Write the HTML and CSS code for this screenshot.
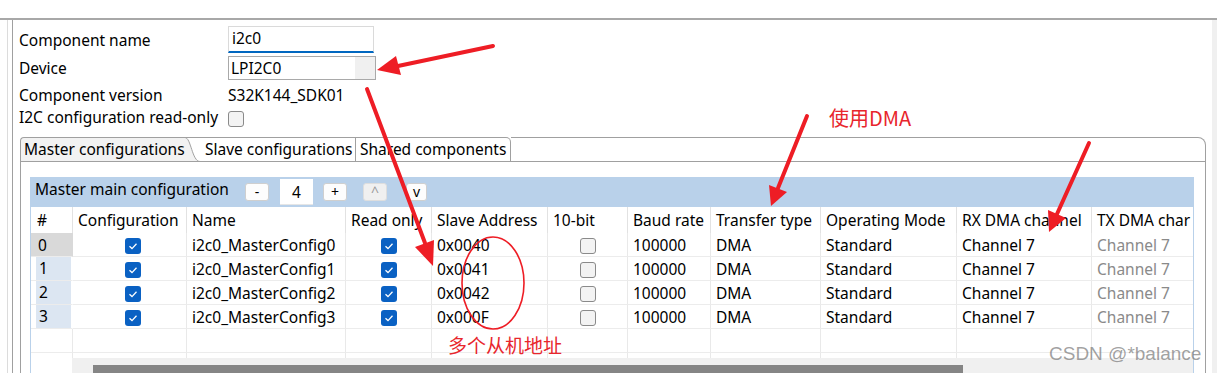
FILE: index.html
```html
<!DOCTYPE html>
<html lang="en">

<head>
    <meta charset="UTF-8">
    <title>Component Inspector - i2c0</title>
    <link rel="stylesheet" href="styles.css">
</head>

<body>
    <div class="window">
        <div class="topbar"></div>
        <div class="main">
            <div class="gutter"></div>
            <div class="spacer"></div>
            <div class="editor">
                <div class="props">
                    <div class="label">Component name</div>
                    <div><div class="textbox">i2c0</div></div>
                    <div class="label">Device</div>
                    <div><div class="combo"><span>LPI2C0</span><span class="combo-btn"></span></div></div>
                    <div class="label">Component version</div>
                    <div class="value">S32K144_SDK01</div>
                    <div class="label">I2C configuration read-only</div>
                    <div><span class="check"></span></div>
                </div>

                <div class="tabfolder">
                    <div class="tabrow">
                        <div class="tab active">Master configurations</div>
                        <svg class="tab-curve" width="15" height="25" viewBox="0 0 15 25">
                            <path d="M0 0.5 C6 0.5 7 24.5 15 24.5 L0 24.5 Z" fill="#f2f2f2" />
                            <path d="M0 0.5 L15 0.5" stroke="#a0a0a0" fill="none" />
                            <path d="M0 0.5 C6 0.5 7 24.5 15 24.5" stroke="#a0a0a0" fill="none" />
                            <path d="M0 24.5 L15 24.5" stroke="#a0a0a0" fill="none" />
                        </svg>
                        <div class="tab slave">Slave configurations</div>
                        <div class="tab shared">Shared components</div>
                        <div class="tab-fill"></div>
                    </div>
                    <div class="tabbody">
                        <div class="section">
                            <div class="section-head">
                                <span class="section-title">Master main configuration</span>
                                <button class="btn minus">-</button>
                                <span class="count">4</span>
                                <button class="btn plus">+</button>
                                <button class="btn up" disabled>^</button>
                                <button class="btn down">v</button>
                            </div>
                            <div class="gridview">
                                <table>
                                    <colgroup>
                                        <col style="width:42px">
                                        <col style="width:114px">
                                        <col style="width:159px">
                                        <col style="width:86px">
                                        <col style="width:116px">
                                        <col style="width:80px">
                                        <col style="width:83px">
                                        <col style="width:110px">
                                        <col style="width:136px">
                                        <col style="width:135px">
                                        <col style="width:150px">
                                    </colgroup>
                                    <thead>
                                        <tr>
                                            <th class="idx">#</th>
                                            <th>Configuration</th>
                                            <th>Name</th>
                                            <th>Read only</th>
                                            <th>Slave Address</th>
                                            <th>10-bit</th>
                                            <th>Baud rate</th>
                                            <th>Transfer type</th>
                                            <th>Operating Mode</th>
                                            <th>RX DMA channel</th>
                                            <th>TX DMA char</th>
                                        </tr>
                                    </thead>
                                    <tbody>
                                        <tr>
                                            <td class="idx sel">0</td>
                                            <td class="cb-conf"><span class="check on"><svg viewBox="0 0 16 16"><path d="M4.5 8.3 L7 10.6 L11.5 5.8" /></svg></span></td>
                                            <td>i2c0_MasterConfig0</td>
                                            <td class="cb-ro"><span class="check on"><svg viewBox="0 0 16 16"><path d="M4.5 8.3 L7 10.6 L11.5 5.8" /></svg></span></td>
                                            <td>0x0040</td>
                                            <td class="cb-bit"><span class="check"></span></td>
                                            <td>100000</td>
                                            <td>DMA</td>
                                            <td>Standard</td>
                                            <td>Channel 7</td>
                                            <td class="muted">Channel 7</td>
                                        </tr>
                                        <tr>
                                            <td class="idx"><div class="rowhead">1</div></td>
                                            <td class="cb-conf"><span class="check on"><svg viewBox="0 0 16 16"><path d="M4.5 8.3 L7 10.6 L11.5 5.8" /></svg></span></td>
                                            <td>i2c0_MasterConfig1</td>
                                            <td class="cb-ro"><span class="check on"><svg viewBox="0 0 16 16"><path d="M4.5 8.3 L7 10.6 L11.5 5.8" /></svg></span></td>
                                            <td>0x0041</td>
                                            <td class="cb-bit"><span class="check"></span></td>
                                            <td>100000</td>
                                            <td>DMA</td>
                                            <td>Standard</td>
                                            <td>Channel 7</td>
                                            <td class="muted">Channel 7</td>
                                        </tr>
                                        <tr>
                                            <td class="idx"><div class="rowhead">2</div></td>
                                            <td class="cb-conf"><span class="check on"><svg viewBox="0 0 16 16"><path d="M4.5 8.3 L7 10.6 L11.5 5.8" /></svg></span></td>
                                            <td>i2c0_MasterConfig2</td>
                                            <td class="cb-ro"><span class="check on"><svg viewBox="0 0 16 16"><path d="M4.5 8.3 L7 10.6 L11.5 5.8" /></svg></span></td>
                                            <td>0x0042</td>
                                            <td class="cb-bit"><span class="check"></span></td>
                                            <td>100000</td>
                                            <td>DMA</td>
                                            <td>Standard</td>
                                            <td>Channel 7</td>
                                            <td class="muted">Channel 7</td>
                                        </tr>
                                        <tr>
                                            <td class="idx"><div class="rowhead">3</div></td>
                                            <td class="cb-conf"><span class="check on"><svg viewBox="0 0 16 16"><path d="M4.5 8.3 L7 10.6 L11.5 5.8" /></svg></span></td>
                                            <td>i2c0_MasterConfig3</td>
                                            <td class="cb-ro"><span class="check on"><svg viewBox="0 0 16 16"><path d="M4.5 8.3 L7 10.6 L11.5 5.8" /></svg></span></td>
                                            <td>0x000F</td>
                                            <td class="cb-bit"><span class="check"></span></td>
                                            <td>100000</td>
                                            <td>DMA</td>
                                            <td>Standard</td>
                                            <td>Channel 7</td>
                                            <td class="muted">Channel 7</td>
                                        </tr>
                                        <tr class="empty">
                                            <td></td><td></td><td></td><td></td><td></td><td></td>
                                            <td></td><td></td><td></td><td></td><td></td>
                                        </tr>
                                        <tr class="empty">
                                            <td></td><td></td><td></td><td></td><td></td><td></td>
                                            <td></td><td></td><td></td><td></td><td></td>
                                        </tr>
                                    </tbody>
                                </table>
                            </div>
                            <div class="hscroll"><div class="thumb"></div></div>
                        </div>
                    </div>
                </div>
            </div>
            <div class="vbar"></div>
        </div>

        <!-- red annotations drawn on top of the screenshot -->
        <svg class="marks" width="1217" height="373" viewBox="0 0 1217 373">
            <g stroke="#ee1d25" stroke-width="4" stroke-linecap="round" fill="none">
                <path d="M493 46 L398 66" />
                <path d="M367 89 L425 243" />
                <path d="M807 116 L778 188" />
                <path d="M1089 143 L1057 214" />
            </g>
            <g fill="#ee1d25">
                <path d="M377 70 L401 75 L396 56 Z" />
                <path d="M433 266 L434 240 L415 247 Z" />
                <path d="M771 206 L787 192 L769 185 Z" />
                <path d="M1049 232 L1066 218 L1048 210 Z" />
            </g>
            <ellipse cx="493" cy="283" rx="31" ry="46" fill="none" stroke="#ee1d25" stroke-width="1.6" />
        </svg>
        <div class="note note-dma">使用DMA</div>
        <div class="note note-addr">多个从机地址</div>
        <div class="watermark">CSDN @*balance</div>
    </div>
</body>

</html>
```

FILE: styles.css
```css
body {
    margin: 0;
    font-family: "Noto Sans", "Open Sans", sans-serif;
    font-size: 15.5px;
    color: #000;
    background: #fff;
}

.window {
    position: relative;
    width: 1217px;
    height: 373px;
    overflow: hidden;
    display: flex;
    flex-direction: column;
}

.topbar {
    flex: none;
    height: 18px;
    border-bottom: 2px solid #a8a8a8;
}

.main {
    flex: 1;
    display: flex;
    min-height: 0;
}

.gutter {
    width: 7px;
    border-right: 1px solid #dcdcdc;
}

.spacer {
    width: 4px;
}

.editor {
    flex: 1;
    min-width: 0;
    border-left: 1px solid #a0a0a0;
    padding: 7px 0 0 6px;
}

.vbar {
    width: 5px;
    background: #f0f0f0;
}

/* component properties */
.props {
    display: grid;
    grid-template-columns: 209px auto;
    grid-template-rows: 26px 30px 23px 22px;
    align-items: center;
}

.textbox {
    width: 141px;
    height: 24px;
    line-height: 23px;
    padding-left: 3px;
    border: 1px solid #dadada;
    border-bottom: 2px solid #0067c0;
    box-sizing: content-box;
    margin-top: -1px;
}

.combo {
    width: 144px;
    height: 22px;
    border: 1px solid #a9a9a9;
    display: flex;
    justify-content: space-between;
    line-height: 22px;
    padding-left: 2px;
}

.combo-btn {
    width: 20px;
    background: #f0f0f0;
}

.check {
    display: inline-block;
    width: 14px;
    height: 14px;
    border: 1px solid #8a8a8a;
    border-radius: 3px;
    background: #f3f3f3;
    vertical-align: middle;
}

.check.on {
    width: 16px;
    height: 16px;
    border: none;
    background: #0a61c3;
}

.check.on svg {
    display: block;
    width: 16px;
    height: 16px;
}

.check.on path {
    stroke: #fff;
    stroke-width: 1.3;
    fill: none;
}

/* tab folder */
.tabfolder {
    margin: 9px 6px 0 1px;
}

.tabrow {
    display: flex;
    height: 25px;
}

.tab {
    box-sizing: border-box;
    height: 25px;
    line-height: 22px;
    border-top: 1px solid #a0a0a0;
    border-bottom: 1px solid #a0a0a0;
    white-space: nowrap;
    overflow: hidden;
}

.tab.active {
    width: 165px;
    padding-left: 3px;
    background: #f2f2f2;
    border-left: 1px solid #a0a0a0;
    border-top-left-radius: 4px;
}

.tab-curve {
    display: block;
    flex: none;
}

.tab.slave {
    width: 156px;
    padding-left: 5px;
    border-right: 1px solid #a0a0a0;
}

.tab.shared {
    width: 155px;
    padding-left: 4px;
    border-right: 1px solid #a0a0a0;
    border-top-right-radius: 5px;
}

.tab-fill {
    flex: 1;
    border-top: 1px solid #a0a0a0;
    border-bottom: 1px solid #a0a0a0;
    border-right: 1px solid #a0a0a0;
    border-top-right-radius: 8px;
}

.tabbody {
    height: 240px;
    border-left: 1px solid #a0a0a0;
    border-right: 1px solid #a0a0a0;
    padding: 15px 11px 0 9px;
}

/* master configuration table */
.section {
    border: 1px solid #b9d1ea;
    border-top: none;
}

.section-head {
    display: flex;
    align-items: center;
    height: 30px;
    background: #b9d1ea;
    padding-left: 4px;
}

.section-title {
    width: 210px;
    padding-bottom: 6px;
    white-space: nowrap;
}

.btn {
    box-sizing: border-box;
    height: 18px;
    width: 24px;
    padding: 0;
    border: 1px solid #cfcfcf;
    border-radius: 3px;
    background: #fdfdfd;
    font-family: inherit;
    font-size: 14px;
    line-height: 14px;
    color: #000;
}

.btn:disabled {
    background: #f0f0f0;
    border-color: #dedede;
    color: #9a9a9a;
}

.count {
    width: 33px;
    height: 26px;
    line-height: 26px;
    margin-left: 11px;
    text-align: center;
    background: #fff;
    box-shadow: inset 0 -1px 0 #e6e6e6;
}

.btn.plus {
    margin-left: 10px;
}

.btn.up {
    margin-left: 16px;
}

.btn.down {
    margin-left: 19px;
    width: 21px;
}

.gridview {
    height: 151px;
    overflow: hidden;
}

table {
    width: 1211px;
    table-layout: fixed;
    border-collapse: separate;
    border-spacing: 0;
}

th,
td {
    box-sizing: border-box;
    padding: 0 0 0 5px;
    border-right: 1px solid #e9e9e9;
    text-align: left;
    white-space: nowrap;
    overflow: hidden;
    font-weight: normal;
}

th {
    height: 26px;
    border-right-color: #e2e2e2;
}

td {
    height: 24px;
    border-bottom: 1px solid #ececec;
}

th.idx {
    padding-left: 6px;
}

td.idx {
    padding: 0;
    border-right-color: transparent;
}

td.idx.sel {
    background: #d9d9d9;
    padding-left: 7px;
}

.rowhead {
    margin: 0 1px 0 5px;
    height: 23px;
    line-height: 23px;
    padding-left: 3px;
    background: #dce6f2;
}

td.cb-conf {
    padding-left: 52px;
}

td.cb-ro {
    padding-left: 35px;
}

td.cb-bit {
    padding-left: 32px;
}

td.muted {
    color: #8a8a8a;
}

.hscroll {
    height: 16px;
    margin-left: 41px;
    background: #f0f0f0;
    padding-top: 7px;
}

.thumb {
    margin-left: 21px;
    width: 870px;
    height: 9px;
    background: #858585;
}

/* annotations */
.marks {
    position: absolute;
    left: 0;
    top: 0;
    pointer-events: none;
}

.note {
    position: absolute;
    font-family: "Noto Sans CJK SC", "Noto Sans", sans-serif;
    font-size: 19px;
    line-height: 24px;
    color: #e8262d;
}

.note-dma {
    left: 829px;
    top: 106px;
    font-size: 20px;
}

.note-addr {
    left: 448px;
    top: 333px;
}

.watermark {
    position: absolute;
    left: 1049px;
    top: 342px;
    font-family: "Liberation Sans", sans-serif;
    font-size: 19px;
    line-height: 24px;
    color: rgba(120, 120, 120, 0.7);
}
```
